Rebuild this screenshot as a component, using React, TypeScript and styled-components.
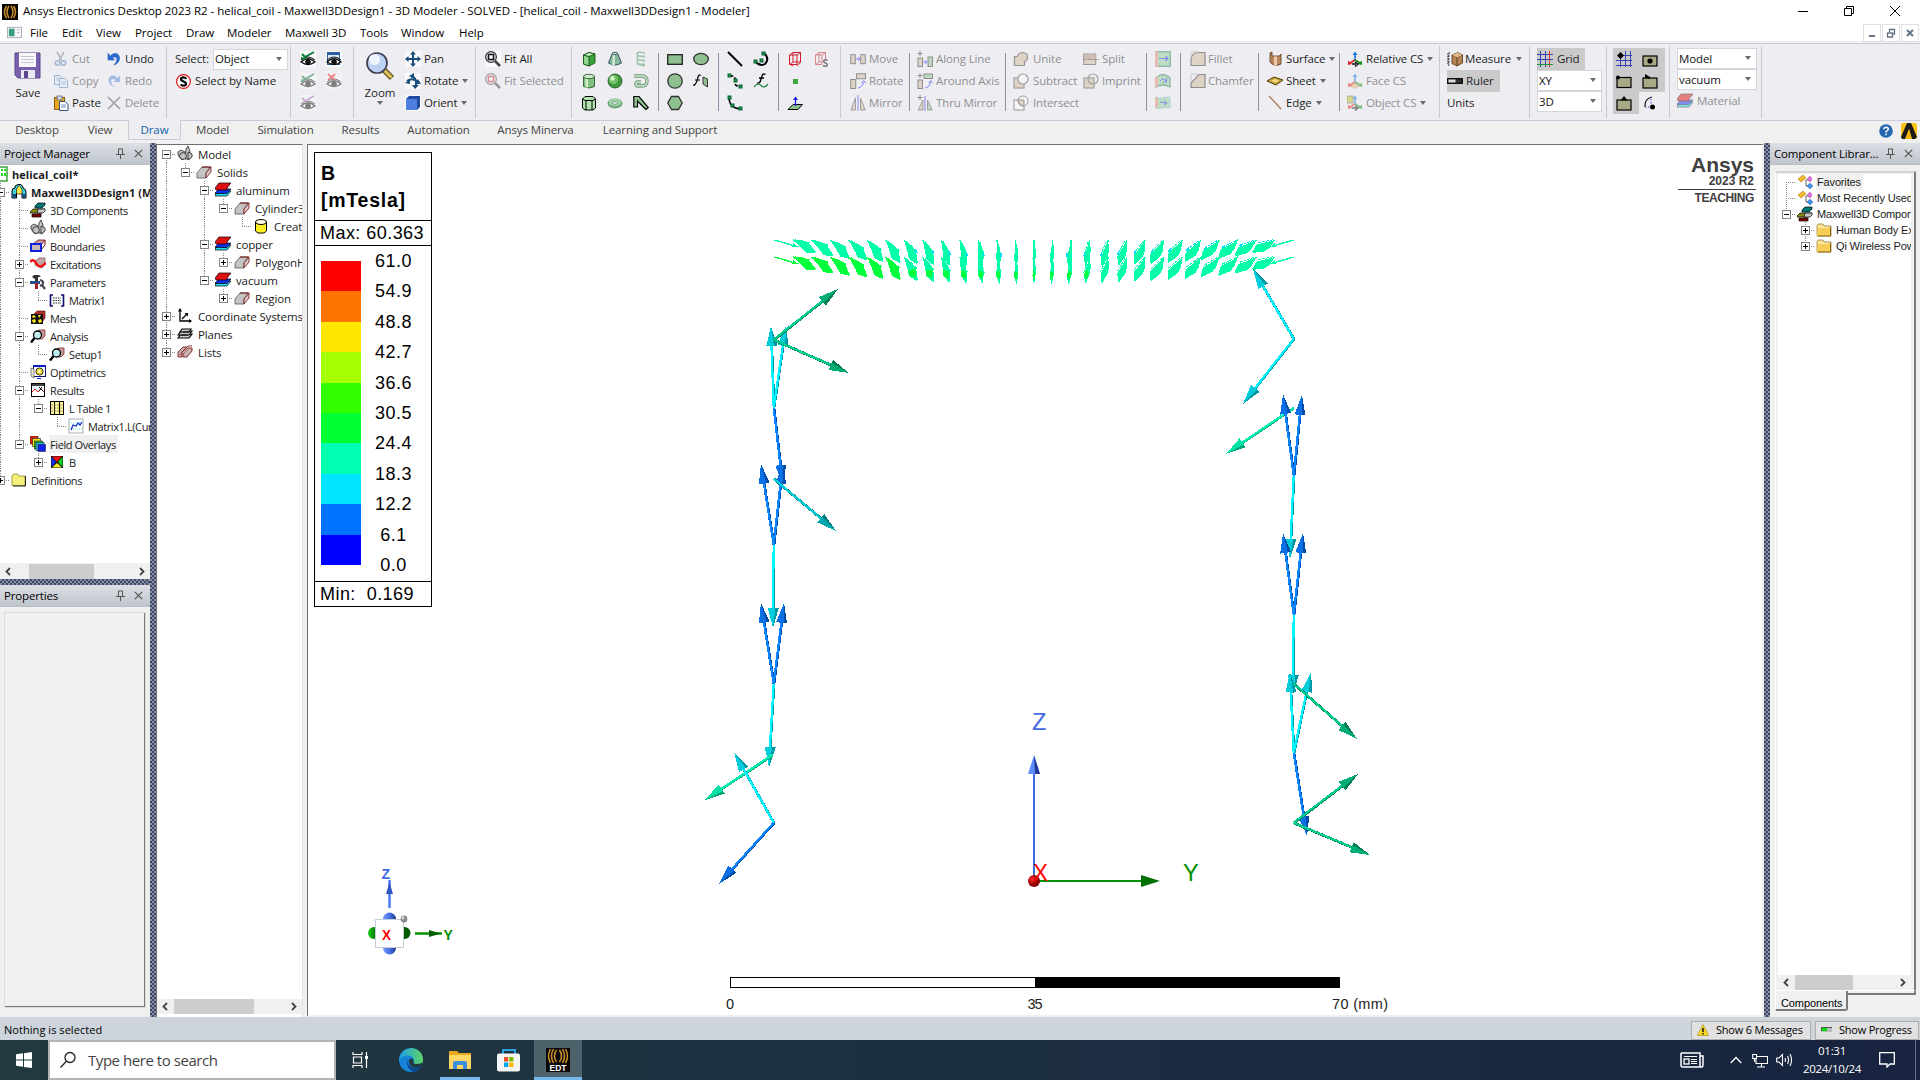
import React from 'react';
import styled, { createGlobalStyle, css } from 'styled-components';

const UI = `"Open Sans", "Noto Sans", sans-serif`;
const SANS = `"Liberation Sans", Arial, sans-serif`;

const Global = createGlobalStyle`
  * { box-sizing: border-box; }
  html, body { margin: 0; padding: 0; overflow: hidden; background: #f0f0f0; }
  body { font-family: ${UI}; font-size: 11.5px; color: #000; }
  svg { display: block; flex: none; }
`;

/* ---------- shell ---------- */
const Shell = styled.div`
  width: 1920px; height: 1080px; display: flex; flex-direction: column; overflow: hidden;
  white-space: nowrap; background: #f0f0f0;
`;
const TitleBar = styled.header`
  height: 23px; flex: none; background: #fff; display: flex; align-items: center; padding-left: 2px;
`;
const TitleText = styled.div`
  flex: 1; margin-left: 5px; font-size: 11.5px; letter-spacing: -0.02px; line-height: 18px; padding-bottom: 1px;
`;
const WindowButtons = styled.div`
  display: flex; padding-bottom: 2px; padding-right: 2px;
  & > svg { margin: 0 15px; }
`;
const MenuBar = styled.nav`
  height: 20px; flex: none; display: flex; align-items: center; background: #fff; padding-left: 7px;
  border-bottom: 2px solid #f0f0f0;
`;
const MenuItem = styled.span<{ $w: number }>`
  width: ${p => p.$w}px; font-size: 11.5px; letter-spacing: -0.05px; line-height: 16px; padding-top: 2px;
`;
const MdiButtons = styled.div`
  margin-left: auto; display: flex; gap: 1px; align-self: flex-start; padding-right: 1px; padding-top: 1px;
`;
const MdiButton = styled.div`
  width: 18px; height: 18px; border: 1px solid #dfdfe4; background: #fff; display: flex; align-items: center; justify-content: center;
`;

/* ---------- ribbon ---------- */
const RibbonBar = styled.section`
  height: 78px; flex: none; display: flex; background: #eeeef2; border-top: 1px solid #c9cbdd; border-bottom: 1px solid #c9cbdd;
  padding-top: 2px;
`;
const Group = styled.div<{ $w: number; $last?: boolean }>`
  width: ${p => p.$w}px; height: 72px; flex: none; display: flex; padding-top: 2px;
  border-right: 1px solid ${p => (p.$last ? 'transparent' : '#c6c8d8')};
`;
const Col = styled.div<{ $w: number; $ml?: number }>`
  width: ${p => p.$w}px; margin-left: ${p => p.$ml ?? 0}px; flex: none; display: flex; flex-direction: column;
`;
const Rule = styled.div`
  width: 1px; height: 58px; margin-top: 5px; background: #8592a5; flex: none;
`;
const Tool = styled.div<{ $off?: boolean; $on?: boolean; $gap?: number }>`
  height: 22px; display: flex; align-items: center; gap: ${p => p.$gap ?? 3}px; font-size: 11.5px; letter-spacing: -0.12px; color: #1e1e1e;
  & > span { line-height: 16px; padding-bottom: 1px; }
  ${p => p.$off && css`color: #8f8f92; & > svg { opacity: 0.5; }`}
  ${p => p.$on && css`background: #cacacb;`}
`;
const BigTool = styled.div`
  display: flex; flex-direction: column; align-items: center; padding-top: 3px; font-size: 11.5px; color: #1e1e1e;
  & > span { line-height: 16px; margin-top: 4px; }
`;
const Arrow = styled.i<{ $ml?: number }>`
  width: 0; height: 0; border: 3px solid transparent; border-top: 4px solid #6b6b6b; border-bottom: 0; margin-left: ${p => p.$ml ?? 1}px;
`;
const Combo = styled.div<{ $w: number }>`
  width: ${p => p.$w}px; height: 21px; border: 1px solid #d5d5dc; background: #fff; display: flex; align-items: center;
  justify-content: space-between; padding: 0 5px 1px 1px; font-size: 11.5px; letter-spacing: -0.1px; color: #111; flex: none;
`;
const Toggle = styled.div<{ $on?: boolean }>`
  width: 26px; height: 22px; display: flex; align-items: center; justify-content: center; padding: 0 4px 1px 0; background: ${p => (p.$on ? '#cacacb' : 'transparent')};
`;
const ToggleRow = styled.div` display: flex; `;

/* ---------- tabs ---------- */
const TabStrip = styled.div`
  height: 22px; flex: none; display: flex; background: #f0f0f0; padding-left: 2px;
`;
const Tab = styled.div<{ $w: number; $active?: boolean }>`
  width: ${p => p.$w}px; height: 19px; text-align: center; font-size: 11.5px; line-height: 17px; letter-spacing: -0.1px; color: #444;
  ${p => p.$active && css`
    color: #0e5fa8; background: #eeeef2; border: 1px solid #c9cbdd; border-top: 0; position: relative; margin-top: -1px; height: 20px; line-height: 20px;
  `}
`;
const TabIcons = styled.div`
  margin-left: auto; display: flex; gap: 8px; align-items: center; padding-right: 3px; height: 20px;
`;

/* ---------- workspace ---------- */
const Workspace = styled.main` flex: 1; min-height: 0; display: flex; `;
const Dock = styled.aside` width: 150px; flex: none; display: flex; flex-direction: column; `;
const DockHeader = styled.div`
  height: 22px; flex: none; display: flex; align-items: center; gap: 9px; padding: 0 7px 0 4px;
  background: linear-gradient(#dcdfe4, #bfc5cd); font-size: 11.5px; letter-spacing: -0.15px;
  border-bottom: 1px solid #b9bec6;
  & > span { flex: 1; min-width: 0; }
`;
const Splitter = styled.div<{ $h?: boolean }>`
  flex: none; ${p => (p.$h ? 'height: 6px;' : 'width: 6px;')}
  background-color: #868a90;
  background-image: repeating-conic-gradient(#34497a 0 25%, #8e8e8e 0 50%);
  background-size: 4px 4px;
`;
const TreePane = styled.div` flex: 1; min-height: 0; background: #fff; overflow: hidden; `;
const TreeRow = styled.div<{ $h: number }>`
  height: ${p => p.$h}px; display: flex; align-items: center;
`;
const Cell = styled.div`
  width: 19px; height: 100%; flex: none; display: grid; grid-template-columns: 9px 1px 9px; grid-template-rows: 1fr 1px 1fr;
`;
const Dots = styled.i<{ $area: string; $h?: boolean }>`
  grid-area: ${p => p.$area};
  background: repeating-linear-gradient(${p => (p.$h ? '90deg' : '180deg')}, #8a8a8a 0 1px, transparent 1px 2px);
`;
const Expander = styled.i<{ $plus?: boolean }>`
  grid-area: 1 / 1 / 4 / 4; place-self: center; width: 9px; height: 9px; border: 1px solid #848484; background:
  linear-gradient(#000, #000) center / 5px 1px no-repeat,
  ${p => (p.$plus ? 'linear-gradient(#000, #000) center / 1px 5px no-repeat,' : '')} #fff;
`;
const TreeIcon = styled.span` width: 16px; height: 16px; flex: none; margin-left: 1px; `;
const TreeLabel = styled.span<{ $bold?: boolean; $sel?: boolean; $font: string; $size: number; $ls: number }>`
  margin-left: 3px; padding: 0 2px 0 1px; height: 100%; display: flex; align-items: center; color: #1b1b1b; line-height: 15px;
  font-family: ${p => p.$font}; font-size: ${p => p.$size}px; letter-spacing: ${p => p.$ls}px;
  font-weight: ${p => (p.$bold ? 700 : 400)}; background: ${p => (p.$sel ? '#f0f0f0' : 'transparent')};
`;
const ScrollTrack = styled.div<{ $h: number }>`
  height: ${p => p.$h}px; flex: none; background: #f0f0f0; display: flex; align-items: center; justify-content: space-between; padding: 0 4px;
`;
const Thumb = styled.div<{ $w: number; $l: number }>`
  width: ${p => p.$w}px; height: 15px; background: #cdcdcd; margin-left: ${p => p.$l}px; margin-right: auto;
`;
const PropertiesBox = styled.div`
  margin: 5px 4px 9px; flex: 1; border: 1px solid #fff; border-right: 2px solid #7a7a7a; border-bottom: 2px solid #7a7a7a; outline: 1px solid #dcdcdc; outline-offset: -1px;
`;
const ModelPane = styled.div`
  width: 147px; flex: none; background: #fff; display: flex; flex-direction: column; border-top: 1px solid #6f6f6f; border-left: 1px solid #6f6f6f;
  border-right: 1px solid #e3e3e3; margin-top: 1px; padding-bottom: 3px;
`;
const Gap = styled.div` width: 4px; flex: none; background: #f0f0f0; `;
const Viewport = styled.div`
  flex: 1; position: relative; background: #fff; border-top: 1px solid #6f6f6f; border-left: 1px solid #6f6f6f; margin-top: 1px; overflow: hidden;
  border-bottom: 2px solid #f0f0f0; border-right: 2px solid #f0f0f0;
`;
const LibraryFrame = styled.div`
  flex: 1; min-height: 0; margin: 6px 4px 6px 5px; display: flex; flex-direction: column;
`;
const LibraryPane = styled.div`
  flex: 1; min-height: 0; border: 1px solid #fff; border-top: 2px solid #d4d4d4; border-right: 2px solid #7a7a7a; padding: 1px 3px 0 2px; display: flex; flex-direction: column;
`;
const LibraryTabs = styled.div` display: flex; height: 20px; flex: none; `;
const LibraryTab = styled.div`
  width: 73px; border: 1px solid #fff; border-top: 0; border-right: 2px solid #7a7a7a; border-bottom: 2px solid #7a7a7a; font: 11px ${SANS}; line-height: 25px; padding-left: 5px;
  letter-spacing: -0.1px; border-radius: 0 0 3px 2px;
`;
const LibraryEdge = styled.div` flex: 1; height: 4px; border-bottom: 2px solid #7a7a7a; border-right: 2px solid #7a7a7a; `;

/* ---------- legend ---------- */
const Legend = styled.div`
  position: absolute; left: 6px; top: 7px; width: 118px; height: 455px; border: 1px solid #000; background: #fff;
  display: flex; flex-direction: column; font-family: ${SANS}; font-size: 18px; letter-spacing: 0.45px;
`;
const LegendTitle = styled.div`
  height: 67px; padding: 7px 0 0 6px; font-size: 19.5px; font-weight: 700; line-height: 27px; letter-spacing: 0.75px;
`;
const LegendLine = styled.div` height: 25px; border-top: 1px solid #000; line-height: 24px; padding-left: 5px; white-space: pre; `;
const LegendBody = styled.div` flex: 1; border-top: 1px solid #000; display: flex; padding: 15px 0 0 6px; `;
const Swatches = styled.div` width: 40px; height: 304px; display: flex; flex-direction: column; `;
const Swatch = styled.i<{ $c: string }>` flex: 1; background: ${p => p.$c}; `;
const Ticks = styled.div` margin: -15px 0 0 13px; width: 39px; `;
const Tick = styled.div` height: 30.4px; line-height: 30.4px; text-align: center; `;
const Brand = styled.div`
  position: absolute; right: 6px; top: 8px; width: 78px; text-align: right; font-family: ${SANS}; font-weight: 700; color: #404040;
  display: flex; flex-direction: column;
`;
const BrandName = styled.div` font-size: 21px; line-height: 24px; letter-spacing: 0; padding-right: 2px; `;
const BrandYear = styled.div` font-size: 12px; line-height: 12px; padding: 0 2px 2px 0; border-bottom: 1px solid #404040; margin-top: -2px; `;
const BrandTier = styled.div` font-size: 12px; line-height: 16px; padding-right: 2px; letter-spacing: -0.4px; `;

/* ---------- status + taskbar ---------- */
const StatusBar = styled.footer`
  height: 23px; flex: none; background: #cdd4dc; display: flex; align-items: center; padding: 0 1px 0 4px; font-size: 11px; gap: 4px;
  & > span { flex: 1; padding-top: 1px; letter-spacing: 0.05px; }
`;
const StatusButton = styled.div<{ $w: number }>`
  width: ${p => p.$w}px; height: 19px; margin-top: 3px; border: 1px solid #adadad; background: #e1e1e1; display: flex; align-items: center; padding: 0 0 1px 5px; gap: 7px;
  font-size: 11px; letter-spacing: -0.22px;
`;
const Taskbar = styled.footer`
  height: 40px; flex: none; display: flex; background: linear-gradient(90deg, #22393f, #1d3240 35%, #1b2a43 70%, #18243f);
`;
const Start = styled.div` width: 48px; display: flex; align-items: center; justify-content: center; `;
const Search = styled.div`
  width: 288px; background: #fff; border: 2px solid #b4b4b6; display: flex; align-items: center; padding-left: 9px; gap: 11px; font-size: 15px; color: #444;
  letter-spacing: -0.45px;
`;
const TaskButton = styled.div<{ $ml: number; $w: number; $active?: boolean; $open?: boolean }>`
  margin-left: ${p => p.$ml}px; width: ${p => p.$w}px; display: flex; align-items: center; justify-content: center;
  background: ${p => (p.$active ? '#4d626a' : 'transparent')}; border-bottom: 3px solid ${p => (p.$open ? '#76b9ed' : 'transparent')}; padding-top: 3px;
`;
const Tray = styled.div` margin-left: auto; display: flex; align-items: center; color: #fff; padding-right: 4px; `;
const TrayItem = styled.div<{ $mr: number }>` margin-right: ${p => p.$mr}px; `;
const Clock = styled.div` width: 62px; text-align: center; font-size: 11.5px; line-height: 18px; letter-spacing: -0.3px; margin-right: 16px; `;
const ShowDesktop = styled.i` width: 1px; height: 40px; background: #66708a; margin-left: 20px; `;

/* ---------- icons ---------- */
const G = '#8fc08f';
const TAN = '#d2b99b';
const node = (x: number, y: number) => <rect key={`${x}-${y}`} x={x} y={y} width="3" height="3" fill="#2e8b57" stroke="#063" />;
const eye = (c = '#111') => (
  <g fill="none" stroke={c}>
    <path d="M1 11 Q8 4.5 15 11 Q8 16 1 11Z" fill="#fff" strokeWidth="1.3" />
    <circle cx="8" cy="11" r="2.4" fill={c} />
    <path d="M1 9 Q8 3 15 9" />
  </g>
);
const block = (
  <g><path d="M1 9 6 3H14L10 9V14H1Z" fill="#c4c4c4" stroke="#555" strokeWidth=".8" /><path d="M10 9 15 3V8L10 14Z" fill="#d8c4c4" stroke="#7a1010" strokeWidth=".8" /><path d="M6 3H15" stroke="#7a1010" /></g>
);
const cube3 = (
  <g><path d="M5 4 8 1H15V3L12 6H5Z" fill="#007878" stroke="#000" strokeWidth=".7" /><path d="M0 10 3 7H15L12 11H0Z" fill="#8a8a10" stroke="#000" strokeWidth=".7" /><path d="M8 7H15V9L13 11H7Z" fill="#c8c8c8" stroke="#000" strokeWidth=".7" /><path d="M2 12H11V15H2Z" fill="#800000" stroke="#000" strokeWidth=".7" /></g>
);
const folder = (
  <g><path d="M1 4 2 2H7L8 4H15V14H1Z" fill="#fbe79a" stroke="#8a7020" strokeWidth=".7" /><path d="M2 6H15V14H1Z" fill="#f6cd56" /><path d="M14.5 5V14H2" fill="none" stroke="#8a6a10" /></g>
);
const folderY = (
  <g><path d="M1 4 2.500 2H6.500L8 4H14V13.500H1Z" fill="#f4f07a" stroke="#8a8a30" strokeWidth=".8" /><path d="M14.500 4V14H2" fill="none" stroke="#222" /></g>
);
const favorite = (
  <g><path d="M1 5 6 1 9 4 4 8Z" fill="#f0b930" stroke="#b07a10" strokeWidth=".6" /><path d="M9 6H12M9 6V12H12" stroke="#666" fill="none" /><path d="M10 5 13 2 15 5 13 8Z" fill="#e070e0" stroke="#a040a0" strokeWidth=".5" /><path d="M10 12 13 9 16 12 13 15Z" fill="#4a90e8" stroke="#2060b0" strokeWidth=".5" /></g>
);
const magnet = (
  <g><path d="M1 14V7Q1 4 4 4V2L7 .5H10L12 3V4Q15 5 15 8V14H11V9Q8 7 5.500 9V14Z" fill="#3fd0dc" stroke="#000" /><path d="M5.500 5 8 1.500 11 5V10H5.500Z" fill="#ffe94a" stroke="#000" strokeWidth=".6" /><path d="M1.500 10H5V14H1.500ZM11.500 10H14.500V14H11.500Z" fill="#1a4a80" /></g>
);
const modelIcon = (
  <g stroke="#222" strokeWidth=".8" fill="#c4c4c4"><path d="M1 6 4 4 8 6V12L5 14 1 9Z" /><path d="M9 3 11 0 13 5V13H8Z" /><circle cx="6" cy="10" r="3.4" /><path d="M11 6 15 8V11L11 14Z" /></g>
);
const magnifier = (
  <g><path d="M7 4 9 2H15V8L12 11H9Z" fill="#c79a9a" stroke="#701818" strokeWidth=".7" /><circle cx="7.5" cy="7" r="4" fill="#b9ecec" stroke="#000" strokeWidth="1.3" /><path d="M4.5 10 1 14.5" stroke="#000" strokeWidth="2.4" /><path d="M6 5H8" stroke="#fff" /></g>
);
const layers = (
  <g stroke="#000" strokeWidth=".7"><path d="M0 13 4 9H16L12 14H0Z" fill="#20e0f0" /><path d="M0 11 4 7H16L12 11.5H0Z" fill="#1030e8" /><path d="M0 6 4 1H16L12 6V8H1Z" fill="#e01010" /></g>
);
const booleanTile = (front: React.ReactNode) => <g stroke="#555" strokeWidth="1.200"><rect x="1" y="5" width="10" height="10" fill={TAN} />{front}</g>;
const csAxes = (
  <g strokeWidth="1.6" fill="none"><path d="M8 9V3" stroke="#1978d8" /><path d="M5.5 4 8 .5 10.5 4Z" fill="#1978d8" /><path d="M8 9 3 12" stroke="#e02020" /><path d="M1 9.5V14L5 13Z" fill="#e02020" /><path d="M8 9 13 12" stroke="#109010" /><path d="M15 9.5V14L11 13Z" fill="#109010" /></g>
);

const ICONS: Record<string, React.ReactNode> = {
  ansysEdt: <g><rect width="16" height="16" fill="#090705" /><g fill="none" stroke="#c98a2a" strokeWidth="1.5"><path d="M7 2Q3 8 7 14M4.5 2Q.5 8 4.5 14M9 2Q13 8 9 14M11.5 2Q15.500 8 11.500 14" /></g></g>,
  doc: <g><rect x=".5" y="2.500" width="15" height="11" fill="#f4f6fb" stroke="#a9adb9" /><rect x="2" y="4" width="6" height="8" fill="#3a9a80" /><path d="M11 5H13M11 8H13" stroke="#9ab" /></g>,
  cut: <g fill="none" stroke="#5a82b8" strokeWidth="1.600"><path d="M4 1 9 10M11 1 6 10" stroke="#7b8794" /><circle cx="4.500" cy="12" r="2.200" /><circle cx="10.500" cy="12" r="2.200" /></g>,
  copy: <g fill="#e8f0fa" stroke="#4f79b3"><path d="M1.500 2.500H7L9.500 5V11.500H1.500Z" /><path d="M6.500 5.500H12L14.500 8V14.500H6.500Z" /><path d="M8 9H13M8 11H13M3 5H6M3 7H6" strokeWidth=".8" /></g>,
  paste: <g><rect x="1.500" y="2.500" width="10" height="12" fill="#e8a820" stroke="#83600f" /><rect x="4" y="1" width="5" height="4" fill="#d6dae3" stroke="#556" strokeWidth=".7" /><path d="M6.500 6.500H12L15 9.500V15.500H6.500Z" fill="#fff" stroke="#35527a" /><path d="M8 10H13M8 12H13" stroke="#6a8fc4" /></g>,
  undo: <path d="M2 2.500V9H8.500L6.300 6.800Q10.500 4.500 11 8 11 11 8 14 13.500 12 13.500 7 13 2.500 9 2.500 6.500 2.500 4.400 4.900Z" fill="#2a6fd6" stroke="#1d4fa6" strokeWidth=".6" />,
  redo: <path d="M14 2.500V9H7.500L9.700 6.800Q5.500 4.500 5 8 5 11 8 14 2.500 12 2.500 7 3 2.500 7 2.500 9.500 2.500 11.600 4.900Z" fill="#5a8cd6" />,
  del: <path d="M2 2 14 14M14 2 2 14" stroke="#555" strokeWidth="1.600" />,
  selName: <g><circle cx="8" cy="8" r="6.500" fill="#fff" stroke="#e01010" strokeWidth="1.100" /><path d="M10.800 5.500Q8 2.800 5.700 5 5.200 7 8 8T10.300 11Q8 13 5.200 10.800" fill="none" stroke="#000" strokeWidth="2" /></g>,
  showA: <g><rect width="16" height="16" fill="#fafafa" />{eye()}<path d="M2 3 5 6 14 1M1 7 5 8" stroke="#0c7a3c" strokeWidth="2" fill="none" /></g>,
  showWin: <g><rect width="16" height="16" fill="#fafafa" /><rect x="1.500" y="1.500" width="12" height="12" fill="#dbe8f5" stroke="#2a5f9c" /><rect x="1" y="1" width="13" height="3" fill="#2a5f9c" />{eye()}</g>,
  hideX: <g><rect width="16" height="16" fill="#fafafa" />{eye()}<path d="M2 1 9 7M9 1 2 7" stroke="#e02020" strokeWidth="2" fill="none" /></g>,
  showP: <g><rect width="16" height="16" fill="#fafafa" />{eye()}<path d="M2 3 5 6 14 1" stroke="#b070c0" strokeWidth="2" fill="none" /></g>,
  pan: <g><rect width="16" height="16" fill="#fafafa" /><path d="M8 0 11 3.500H9V7H12.500V5L16 8 12.500 11V9H9V12.500H11L8 16 5 12.500H7V9H3.500V11L0 8 3.500 5V7H7V3.500H5Z" fill="#1a4d7c" /></g>,
  rotate: <g><rect width="16" height="16" fill="#fafafa" /><g fill="none" stroke="#1a4d7c" strokeWidth="2"><path d="M6 3Q12 4 11 13" /><path d="M2 8Q7 4 14 9" /></g><path d="M4 3 9 0V6ZM0 10 5 6 5 11ZM13 6 16 11 11 11ZM7 12 14 12 10 16Z" fill="#1a4d7c" /></g>,
  orient: <g><rect width="16" height="16" fill="#fafafa" /><path d="M1 4 4 1H15V12L12 15H1Z" fill="#1f4aa0" /><rect x="1" y="4" width="11" height="11" fill="#4d7fe0" /></g>,
  fitAll: <g><rect width="16" height="16" fill="#fafafa" /><circle cx="6" cy="6" r="5.400" fill="#d8e0f4" stroke="#333" strokeWidth="1.200" /><rect x="3.500" y="3.500" width="5" height="5" fill="#fff" stroke="#111" strokeWidth="1.500" /><path d="M10 10 15 15" stroke="#444" strokeWidth="2.600" /></g>,
  fitSel: <g><circle cx="6" cy="6" r="5.400" fill="#ead8e0" stroke="#555" strokeWidth="1.200" /><rect x="3.500" y="3.500" width="5" height="5" fill="#fff" stroke="#c03030" strokeWidth="1.500" /><path d="M10 10 15 15" stroke="#444" strokeWidth="2.600" /></g>,
  box: <g stroke="#0e4a0e" strokeWidth=".8"><path d="M2.500 4 8 1.500 14 3V12L8 15 2.500 13Z" fill="#3aa23a" /><path d="M2.500 4 8 5.500V15L2.500 13Z" fill="#8fd88f" /><path d="M2.500 4 8 1.500 14 3 8 5.500Z" fill="#c5efc0" /></g>,
  cyl: <g stroke="#1d4a1d" strokeWidth=".8"><path d="M2.500 3.500V13.500Q8 16.500 13.500 13.500V3.500Z" fill="#7fc37f" /><path d="M4.500 5V14.500H7V5Z" fill="#d3f0d0" stroke="none" /><ellipse cx="8" cy="3.500" rx="5.500" ry="2.200" fill="#cdeccb" /></g>,
  poly: <g stroke="#000"><path d="M1.500 4 4 1.500H12L14.500 4V13L12 15H4L1.500 13Z" fill="#b3e3b0" /><path d="M1.500 4 4 5.500H12L14.500 4M5 5.500V15M11 5.500V15" fill="none" /></g>,
  cone: <g stroke="#24445f" strokeWidth=".9"><path d="M5.500 2 1.500 12Q8 16 14.500 12L10.500 2Z" fill="#86b79a" /><path d="M6 3 5 14H8V3Z" fill="#cfeacb" stroke="none" /><ellipse cx="8" cy="2.500" rx="2.500" ry="1.200" fill="#d8efe0" /></g>,
  sphere: <g><circle cx="8" cy="8" r="7" fill="#3f9a3a" stroke="#1d4a1d" strokeWidth=".8" /><circle cx="6.500" cy="6.500" r="4.500" fill="#76c06c" /><circle cx="5.500" cy="5.500" r="2.200" fill="#d6f2cf" /></g>,
  torus: <g><ellipse cx="8" cy="8.500" rx="7.500" ry="5" fill="#6ea87a" /><ellipse cx="8" cy="7.500" rx="6" ry="3.500" fill="#a9d6b0" /><ellipse cx="8" cy="8" rx="3" ry="1.300" fill="#eef4ee" stroke="#4f8560" strokeWidth=".7" /></g>,
  helix: <g fill="none" stroke="#9cc5ab" strokeWidth="1.500"><path d="M12 2Q4 0 4 3T12 5M12 6Q4 4 4 7T12 9M12 10Q4 8 4 11T12 13M4 13 12 15" /></g>,
  spiral: <g fill="none"><path d="M1 3H9Q14 3 14 8T9 13H5Q3 13 3 11T5 9H8" stroke="#6b9c77" strokeWidth="3.400" /><path d="M1 3H9Q14 3 14 8T9 13H5Q3 13 3 11T5 9H8" stroke="#cfe4d2" strokeWidth="1.400" /></g>,
  wireBend: <path d="M.8 1.500H6L15.300 12.500 12.800 14.500 4.500 6V12H.8Z" fill="#8fc08f" stroke="#000" strokeWidth="1.200" />,
  rect: <rect x=".7" y="3.700" width="14.600" height="9.600" fill={G} stroke="#222" strokeWidth="1.300" />,
  ellipse: <ellipse cx="8" cy="8" rx="7.300" ry="5.600" fill={G} stroke="#333" strokeWidth="1.300" />,
  circle: <circle cx="8" cy="8" r="7.200" fill={G} stroke="#333" strokeWidth="1.300" />,
  hexagon: <path d="M4.500 1.500H11.500L15.200 8 11.500 14.500H4.500L.8 8Z" fill={G} stroke="#333" strokeWidth="1.300" />,
  eqSurf: <g><path d="M0 12Q2 13 4 8L5 4Q6 1 8 2.500M2 7H7" fill="none" stroke="#000" strokeWidth="1.200" /><path d="M10 4 14.500 6V14L10 11Z" fill={G} stroke="#333" /></g>,
  line: <path d="M1 1 15 15" stroke="#000" strokeWidth="1.900" />,
  spline: <g><path d="M2 3Q9 2 8 8T14 13" stroke="#000" strokeWidth="1.800" fill="none" strokeDasharray="4 2" />{node(1, 1)}{node(7, 6)}{node(12, 12)}</g>,
  arc3: <g><path d="M2 2Q2 13 13 14" stroke="#000" strokeWidth="1.500" fill="none" />{node(1, 1)}{node(4, 9)}{node(12, 12)}</g>,
  arcC: <g><path d="M11 2Q17 8 12 13 7 16 2 10" stroke="#000" strokeWidth="2" fill="none" />{node(9, 1)}{node(7, 8)}{node(1, 9)}</g>,
  eqCurve: <g fill="none"><path d="M4 10Q7 11 8 6L9 3Q10 0 12.500 1.500M6 5H11" stroke="#000" strokeWidth="1.300" /><path d="M1 14Q5 9 8 12.500T15 11" stroke="#2f8a4a" strokeWidth="1.300" /></g>,
  wireBox: <g fill="none" stroke="#d01c2c"><path d="M2.500 4 6 1.500H13.500L10 4ZM2.500 4V13L6 15M10 4V14.500L13.500 11.500V1.500M2.500 13.500H10M6 1.500V11L2.500 13.500M6 11H13.500" /></g>,
  wireBoxS: <g fill="none" stroke="#d01c2c"><path d="M2.500 4 6 1.500H12.500L9 4ZM2.500 4V13.500H9V4M12.500 1.500V9M6 1.500V11L2.500 13.500M6 11H9" /><path d="M14.500 9.500Q12 8 11 9.500T12.500 12 14 14.500 10 14.500" stroke="#111" strokeWidth="1.600" /></g>,
  point: <rect x="6" y="6" width="5" height="5" fill="#3ea83e" />,
  plane: <g><path d="M1 14.500 6 9.500H15.500L11 14.500Z" fill={G} stroke="#000" /><path d="M8.500 11V3" stroke="#1a1af0" strokeWidth="1.300" /><path d="M6 5 8.500 1.500 11 5Z" fill="#1a1af0" /></g>,
  move: <g><rect x=".7" y="3.700" width="4.600" height="9" fill={TAN} stroke="#333" /><rect x="10.700" y="3.700" width="4.600" height="9" fill={TAN} stroke="#333" /><path d="M6 8H9M8 6 10 8 8 10" stroke="#22f" fill="none" /></g>,
  rot: <g><rect x=".7" y="6.500" width="5" height="9" fill={TAN} stroke="#333" /><rect x="6.500" y=".7" width="9" height="5" fill={TAN} stroke="#333" /><path d="M8 15Q13 14 13.500 9M11.500 10 13.700 7.500 15.500 10" stroke="#22f" fill="none" /></g>,
  mirror: <g><path d="M5.500 3V15H.8ZM10.500 3V15H15.200Z" fill={TAN} stroke="#333" strokeWidth=".8" /><path d="M8 0V16" stroke="#22f" /></g>,
  along: <g><path d="M3 0V5M.5 2.500H5.500" stroke="#333" /><rect x="1" y="7" width="4.500" height="8.500" fill={TAN} stroke="#333" /><rect x="11" y="6" width="4.500" height="9.500" fill={G} stroke="#333" /><path d="M6 11H9M8 9 10 11 8 13" stroke="#22f" fill="none" /></g>,
  around: <g><path d="M3 0V5M.5 2.500H5.500" stroke="#333" /><rect x="1" y="7" width="4.500" height="8.500" fill={TAN} stroke="#333" /><rect x="7" y="1" width="8.500" height="4.500" fill={G} stroke="#333" /><path d="M8 15Q13 14 13.500 9M11.500 10 13.700 7.500 15.500 10" stroke="#22f" fill="none" /></g>,
  thru: <g><path d="M3 0V5M.5 2.500H5.500" stroke="#333" /><path d="M6 5V15H1Z" fill={TAN} stroke="#333" strokeWidth=".8" /><path d="M10.500 5V15H15.200Z" fill={G} stroke="#333" strokeWidth=".8" /><path d="M8 1V16" stroke="#22f" /></g>,
  unite: <path d="M1.500 5.500H4.500Q5 1.500 10 1.500 15 2 14.500 7 14 10 11.500 10.500V14.500H1.500Z" fill={TAN} stroke="#444" strokeWidth="1.200" />,
  subtract: booleanTile(<circle cx="10" cy="6" r="5" fill="#fff" />),
  intersect: <g stroke="#444"><rect x="1" y="5" width="10" height="10" fill="#fff" /><circle cx="10" cy="6" r="5" fill="#fff" /><path d="M5 5H11V10.800Q6 11 5 5Z" fill={TAN} /></g>,
  imprint: booleanTile(<circle cx="10" cy="6" r="5" fill="none" />),
  split: <g><rect x=".7" y="3" width="12" height="10.500" fill={TAN} stroke="#444" /><rect x="1" y="3.500" width="11.500" height="4.500" fill="#b58d75" /><path d="M0 8.500H16" stroke="#222" strokeDasharray="1.500 1" /></g>,
  swV: <g><rect x=".7" y=".7" width="14.600" height="14.600" fill="#8fcf95" stroke="#2a7f5a" strokeWidth="1.300" /><rect x="0" y="0" width="3" height="16" fill="#e08c70" /><path d="M4 7.500H13M10.500 5 13 7.500 10.500 10" stroke="#2222f0" fill="none" strokeWidth="1.200" /></g>,
  swA: <g><path d="M1 5Q8-2 15 5V14Q8 10 1 14Z" fill="#8fcf95" stroke="#2a7f5a" strokeWidth="1.300" /><path d="M0 4 3 3V13L0 15Z" fill="#e08c70" /><path d="M5 8Q8 4 11 8M11.500 5V9H8" stroke="#2222f0" fill="none" /></g>,
  swP: <g><path d="M1 2Q5 4 8 3T15 2V13Q11 12 8 13T1 13Z" fill="#8fcf95" stroke="#7ab0cc" /><path d="M0 2 3 3V12L0 13Z" fill="#e08c70" /><path d="M5 7 11 8M9 6 12 8 9 10" stroke="#2222f0" fill="none" /></g>,
  fillet: <g><path d="M1 14.500V8Q2 2 8 1.500H15V14.500Z" fill={TAN} stroke="#333" strokeWidth="1.200" /><path d="M1 7V1H8" stroke="#999" fill="none" strokeWidth=".8" /></g>,
  chamfer: <g><path d="M1 14.500V10L9 1.500H15V14.500Z" fill={TAN} stroke="#333" strokeWidth="1.200" /><path d="M1 8V1H8" stroke="#999" fill="none" strokeWidth=".8" /></g>,
  surface: <g><path d="M3 2 5 1V5H12Q14 4 14 3V13Q10 16 5 13L3 11Z" fill="#b9855c" stroke="#5e3a1e" strokeWidth=".8" /><path d="M7 5.500H10V14.500H7Z" fill="#eccaa5" /></g>,
  sheet: <g><path d="M0 8 7 4 16 7 9 12Z" fill="#c9a437" stroke="#4f3c0a" /><path d="M4 8 8 6 12 7.500 9 9.500Z" fill="#f0dc8a" /></g>,
  edge: <path d="M2 1 14 14" stroke="#b07c52" strokeWidth="1.400" />,
  relCS: <g>{csAxes}<path d="M5 13H9M8 11 11 13 8 15.500" stroke="#111" strokeWidth="1.500" fill="none" /></g>,
  faceCS: <g><path d="M2 13 8 9 14 12 8 16Z" fill="#e0b070" />{csAxes}</g>,
  objCS: <g><rect x="0" y="1" width="6" height="7" fill="#b8c020" stroke="#555" strokeWidth=".7" />{csAxes}<path d="M5 13H10M8 11 11 13 8 15.500" stroke="#111" strokeWidth="1.500" fill="none" /></g>,
  measure: <g><path d="M3 2H1V14H3M1 5H3M1 8H3M1 11H3" stroke="#000" fill="none" strokeDasharray="1.500 .8" /><path d="M5 4 11 1.500 15.500 4V12L10 15 5 12.500Z" fill="#b98556" stroke="#4c2e12" strokeWidth=".8" /><path d="M5 4 10 6.500V15M10 6.500 15.500 4" stroke="#4c2e12" fill="none" strokeWidth=".8" /><path d="M5 4 11 1.500 15.500 4 10 6.500Z" fill="#e0b98c" /></g>,
  ruler: <g><rect x=".7" y="5.700" width="14.600" height="4.600" fill="#333" stroke="#000" strokeWidth="1.200" /><rect x="1.500" y="6.500" width="7" height="3" fill="#ddd" /></g>,
  grid: <g strokeWidth="1"><path d="M3.500 0V16M8.500 0V16M0 3.500H16M0 8.500H16" stroke="#3344b0" /><path d="M12.500 0V16" stroke="#e03030" /><path d="M0 13.500H16" stroke="#159a30" /></g>,
  snapGrid: <g><path d="M9.500 0V16M14.500 0V16M4.500 6V16M7 4.500H16M0 9.500H16M0 14.500H16" stroke="#3344b0" strokeWidth="1" /><path d="M4.500 1 8 4.500 4.500 8 1 4.500Z" fill="#000" /></g>,
  snapC: <g><rect x="1" y="5" width="14" height="10" fill="#a9a986" stroke="#000" strokeWidth="1.200" /><circle cx="8" cy="10" r="2.600" fill="#000" /></g>,
  snapV: <g><rect x="1" y="4.500" width="14" height="10" fill="#a9a986" stroke="#000" strokeWidth="1.200" /><circle cx="2" cy="4.500" r="2" fill="#000" /></g>,
  snapE: <g><rect x="1" y="5" width="14" height="10" fill="#a9a986" stroke="#000" strokeWidth="1.200" /><path d="M3 5V1L8 4V6Z" fill="#000" /></g>,
  snapF: <g><rect x="1" y="5" width="14" height="10" fill="#a9a986" stroke="#000" strokeWidth="1.200" /><path d="M8 1 11.500 5.500H4.500Z" fill="#000" /></g>,
  snapQ: <g><path d="M3 12Q2 4 10 2" stroke="#111" fill="none" strokeWidth="1.200" /><path d="M3 12H9M9 4V10" stroke="#44c" fill="none" strokeDasharray="1.500 1.500" /><circle cx="10.500" cy="12" r="2.500" fill="#000" /></g>,
  material: layers,
  hcoil: <g><rect x="1" y="1" width="14" height="14" fill="#fff" stroke="#0a8a0a" strokeWidth="1.200" /><path d="M9 3H11V5H9ZM12 3H14V5H12ZM9 7H11V10H9ZM12 7H14V10H12Z" fill="#1edc1e" /></g>,
  magnet, cube3, modelIcon, magnifier, folder, folderY, favorite, block, layers,
  boundary: <g><path d="M3 6 8 2H15L12 6" fill="#c79a9a" stroke="#7a1010" strokeWidth=".8" /><path d="M15 2V7L11 12" stroke="#7a1010" fill="none" /><rect x="1" y="6" width="10" height="7" fill="#c8b8b8" stroke="#1020e0" strokeWidth="2" /></g>,
  excite: <g><path d="M5 5 9 2H15V8L12 12 5 9Z" fill="#c0a8a8" stroke="#7a5050" strokeWidth=".7" /><path d="M0 6Q3 2 6 7T12 10L16 7" stroke="#f01010" strokeWidth="2.400" fill="none" /></g>,
  tools: <g><path d="M4 1H9L11 3H8V15H5V5L2 3Z" fill="#333" /><path d="M0 7H10V10H0Z" fill="#26508a" /><path d="M5 9V15H8V9Z" fill="#a02020" /><path d="M10 6Q15 7 12 11L15 15M10 12 12 11" stroke="#445" strokeWidth="2.200" fill="none" /></g>,
  matrix: <g><path d="M4 3H1.500V14H4M12 3H14.500V14H12" stroke="#101070" strokeWidth="1.600" fill="none" /><path d="M4 6H12M4 8.500H12M4 11H12" stroke="#222" strokeDasharray="1.500 1" /></g>,
  mesh: <g><path d="M4 4 7 1H15V8L13 11" fill="#b03030" stroke="#500" strokeWidth=".6" /><rect x="1" y="4" width="12" height="10" fill="#111" /><path d="M2 6 4 5 6 7 3 8ZM8 5H11L9 8ZM2 10 5 9 6 12 3 13ZM8 10 11 9 12 12 9 13Z" fill="#ffe820" /></g>,
  optim: <g><rect x="3.500" y="1.500" width="12" height="11" fill="#fff" stroke="#101070" /><path d="M3 2H16" stroke="#1020c0" strokeWidth="2" /><path d="M1 4V12L4 14V5Z" fill="#e8e8d0" stroke="#555" strokeWidth=".7" /><circle cx="9.500" cy="7.500" r="3.600" fill="#f0d820" stroke="#333" /><circle cx="9.500" cy="7.500" r="1.300" fill="#fff" /><path d="M7 14.500H11" stroke="#1020e0" /></g>,
  results: <g><rect x="1.500" y="1.500" width="13" height="13" fill="#fff" stroke="#000" /><path d="M1 3H15" stroke="#000" strokeWidth="1.500" /><path d="M2 10 5 7 8 10 11 7 14 10" stroke="#d02020" fill="none" /><path d="M9 5 13 9M12 5 9 9" stroke="#000" /></g>,
  table: <g><rect x="1.500" y="1.500" width="13" height="13" fill="#fff79a" stroke="#000" /><path d="M5.500 2V14M10.500 2V14" stroke="#000" /><path d="M2 5H14M2 8H14M2 11H14" stroke="#776" strokeWidth=".8" strokeDasharray="2 1" /></g>,
  plot: <g><rect x="1" y="1" width="14" height="14" fill="#fff" stroke="#a8b0b8" /><path d="M1 5H15M1 11H15" stroke="#70e8e8" strokeDasharray="1 1" /><path d="M3 12 5 7 8 8 10 5 12 7 14 4" stroke="#1030d0" fill="none" strokeWidth="1.300" /></g>,
  fields: <g stroke="#222" strokeWidth=".6"><rect x="0" y="0" width="8" height="8" fill="#e02010" /><rect x="2.500" y="2.500" width="8" height="8" fill="#f0e020" /><rect x="4.500" y="5" width="8" height="8" fill="#20c020" /><rect x="6" y="6.500" width="8" height="8" fill="#20c8e8" /><rect x="8" y="8.500" width="7.500" height="7" fill="#1020f0" /></g>,
  fieldB: <g><rect x="2" y="2" width="12" height="12" fill="#111" /><path d="M3 2.500H13L8 8Z" fill="#f01010" /><path d="M2.500 3V13L7 8Z" fill="#1030f0" /><path d="M13.500 3V13L9 8Z" fill="#10d820" /><path d="M3 13.500H13L8 9Z" fill="#f8e820" /></g>,
  yCyl: <g><path d="M2.500 4V13L5 15H11L13.500 13V4Z" fill="#ffee20" stroke="#000" /><ellipse cx="8" cy="4" rx="5.500" ry="2.500" fill="#fffbe0" stroke="#000" /></g>,
  coord: <g><path d="M3 1V13H14" stroke="#000" fill="none" strokeWidth="1.300" /><path d="M5 11 10 6" stroke="#000" strokeWidth="1.300" /><path d="M7.500 5H11V8.500ZM1 3.500 3 0 5 3.500ZM12 11 15 13 12 15Z" fill="#000" /></g>,
  planes: <g fill="#ccc" stroke="#000" strokeWidth="1.200"><path d="M1 12 4 8H15L12 12Z" /><path d="M1 9 4 5H15L12 9Z" /><path d="M3 6 5 3H14L12 6Z" /><path d="M4 9H11M6 6H12" /></g>,
  lists: <g fill="#c8b0b0" stroke="#802020" strokeWidth=".9"><path d="M1 8 6 3H10L5 8V13H1Z" /><path d="M6 10 11 4H15V7L10 13H6Z" /><path d="M3 11 11 2H15" fill="none" /></g>,
};

const Icon = ({ n, s = 16 }: { n: string; s?: number }) => (
  <svg width={s} height={s} viewBox="0 0 16 16">{ICONS[n]}</svg>
);

/* ---------- ribbon content ---------- */
type ToolSpec = [icon: string, label: string, off?: boolean, menu?: boolean];
const Tools = ({ w, ml, items, gap }: { w: number; ml: number; items: ToolSpec[]; gap?: number }) => (
  <Col $w={w} $ml={ml}>
    {items.map(([icon, label, off, menu]) => (
      <Tool key={icon + label} $off={off} $gap={gap}>
        <Icon n={icon} />{label && <span>{label}</span>}{menu && <Arrow />}
      </Tool>
    ))}
  </Col>
);

const SaveIcon = () => (
  <svg width="30" height="30" viewBox="0 0 30 30">
    <path d="M2 2H27V27H5L2 24Z" fill="#7a5fae" stroke="#59448c" /><rect x="6" y="2" width="17" height="14" fill="#f8f8fb" />
    <path d="M8 5.500H21M8 8.500H21M8 11.500H21" stroke="#c4c4cf" /><rect x="8" y="19" width="14" height="8" fill="#e9e7f2" /><rect x="11" y="20" width="4" height="7" fill="#5b4790" />
  </svg>
);
const ZoomIcon = () => (
  <svg width="30" height="30" viewBox="0 0 30 30">
    <path d="M19 19 27 27" stroke="#6d5c2a" strokeWidth="6" /><path d="M19 19 26.500 26.500" stroke="#e0c55a" strokeWidth="3" />
    <circle cx="12" cy="12" r="10" fill="#bcd2f3" stroke="#3c3f52" strokeWidth="1.700" /><circle cx="9.500" cy="8.500" r="5.500" fill="#eef5ff" />
  </svg>
);

const Ribbon = () => (
  <RibbonBar>
    <Group $w={167}>
      <Col $w={40} $ml={8}><BigTool><SaveIcon /><span>Save</span></BigTool></Col>
      <Tools w={53} ml={5} items={[['cut', 'Cut', true], ['copy', 'Copy', true], ['paste', 'Paste']]} />
      <Tools w={56} ml={0} items={[['undo', 'Undo'], ['redo', 'Redo', true], ['del', 'Delete', true]]} />
    </Group>
    <Group $w={124}>
      <Col $w={115} $ml={8}>
        <Tool $gap={4}><span>Select:</span><Combo $w={75}>Object<Arrow /></Combo></Tool>
        <Tool $gap={3}><Icon n="selName" s={17} /><span>Select by Name</span></Tool>
      </Col>
    </Group>
    <Group $w={63}>
      <Tools w={26} ml={9} items={[['showA', ''], ['showA', '', true], ['showP', '', true]]} />
      <Tools w={26} ml={0} items={[['showWin', ''], ['hideX', '', true]]} />
    </Group>
    <Group $w={122}>
      <Col $w={40} $ml={6}><BigTool><ZoomIcon /><span>Zoom</span><Arrow $ml={0} /></BigTool></Col>
      <Tools w={70} ml={5} items={[['pan', 'Pan'], ['rotate', 'Rotate', false, true], ['orient', 'Orient', false, true]]} />
    </Group>
    <Group $w={96}>
      <Tools w={84} ml={9} items={[['fitAll', 'Fit All'], ['fitSel', 'Fit Selected', true]]} />
    </Group>
    <Group $w={269}>
      <Tools w={26} ml={9} items={[['box', ''], ['cyl', ''], ['poly', '']]} />
      <Tools w={26} ml={0} items={[['cone', ''], ['sphere', ''], ['torus', '']]} />
      <Tools w={25} ml={0} items={[['helix', ''], ['spiral', ''], ['wireBend', '']]} />
      <Rule />
      <Tools w={26} ml={8} items={[['rect', ''], ['circle', ''], ['hexagon', '']]} />
      <Tools w={25} ml={0} items={[['ellipse', ''], ['eqSurf', '']]} />
      <Rule />
      <Tools w={26} ml={8} items={[['line', ''], ['spline', ''], ['arc3', '']]} />
      <Tools w={25} ml={0} items={[['arcC', ''], ['eqCurve', '']]} />
      <Rule />
      <Tools w={26} ml={8} items={[['wireBox', ''], ['point', ''], ['plane', '']]} />
      <Tools w={20} ml={0} items={[['wireBoxS', '', true]]} />
    </Group>
    <Group $w={599}>
      <Tools w={59} ml={9} items={[['move', 'Move', true], ['rot', 'Rotate', true], ['mirror', 'Mirror', true]]} />
      <Rule />
      <Tools w={88} ml={7} items={[['along', 'Along Line', true], ['around', 'Around Axis', true], ['thru', 'Thru Mirror', true]]} />
      <Rule />
      <Tools w={70} ml={7} gap={4} items={[['unite', 'Unite', true], ['subtract', 'Subtract', true], ['intersect', 'Intersect', true]]} />
      <Tools w={63} ml={0} items={[['split', 'Split', true], ['imprint', 'Imprint', true]]} />
      <Rule />
      <Tools w={25} ml={8} items={[['swV', '', true], ['swA', '', true], ['swP', '', true]]} />
      <Rule />
      <Tools w={68} ml={9} gap={2} items={[['fillet', 'Fillet', true], ['chamfer', 'Chamfer', true]]} />
      <Rule />
      <Tools w={72} ml={8} items={[['surface', 'Surface', false, true], ['sheet', 'Sheet', false, true], ['edge', 'Edge', false, true]]} />
      <Rule />
      <Tools w={90} ml={7} items={[['relCS', 'Relative CS', false, true], ['faceCS', 'Face CS', true], ['objCS', 'Object CS', true, true]]} />
    </Group>
    <Group $w={90}>
      <Col $w={84} $ml={7}>
        <Tool $gap={2}><Icon n="measure" /><span>Measure</span><Arrow $ml={3} /></Tool>
        <Col $w={53}><Tool $on><Icon n="ruler" /><span>Ruler</span></Tool></Col>
        <Tool><span>Units</span></Tool>
      </Col>
    </Group>
    <Group $w={77}>
      <Col $w={66} $ml={7}>
        <Col $w={48}><Tool $on $gap={4}><Icon n="grid" /><span>Grid</span></Tool></Col>
        <Combo $w={65}>XY<Arrow /></Combo>
        <Combo $w={65}>3D<Arrow /></Combo>
      </Col>
    </Group>
    <Group $w={63}>
      <Col $w={52} $ml={6}>
        <ToggleRow><Toggle $on><Icon n="snapGrid" /></Toggle><Toggle $on><Icon n="snapC" /></Toggle></ToggleRow>
        <ToggleRow><Toggle $on><Icon n="snapV" /></Toggle><Toggle $on><Icon n="snapE" /></Toggle></ToggleRow>
        <ToggleRow><Toggle $on><Icon n="snapF" /></Toggle><Toggle><Icon n="snapQ" /></Toggle></ToggleRow>
      </Col>
    </Group>
    <Group $w={92}>
      <Col $w={80} $ml={7}>
        <Combo $w={80}>Model<Arrow /></Combo>
        <Combo $w={80}>vacuum<Arrow /></Combo>
        <Tool $off $gap={4}><Icon n="material" /><span>Material</span></Tool>
      </Col>
    </Group>
  </RibbonBar>
);

/* ---------- trees ---------- */
type Row = { g: string; e?: '+' | '-'; i: string; t: string; b?: boolean; s?: boolean };
const PROJECT: Row[] = [
  { g: '', i: 'hcoil', t: 'helical_coil*', b: true },
  { g: 't', e: '-', i: 'magnet', t: 'Maxwell3DDesign1 (Magnetostatic)', b: true },
  { g: '|t', i: 'cube3', t: '3D Components' },
  { g: '|t', i: 'modelIcon', t: 'Model' },
  { g: '|t', i: 'boundary', t: 'Boundaries' },
  { g: '|t', e: '+', i: 'excite', t: 'Excitations' },
  { g: '|t', e: '-', i: 'tools', t: 'Parameters' },
  { g: '||l', i: 'matrix', t: 'Matrix1' },
  { g: '|t', i: 'mesh', t: 'Mesh' },
  { g: '|t', e: '-', i: 'magnifier', t: 'Analysis' },
  { g: '||l', i: 'magnifier', t: 'Setup1' },
  { g: '|t', i: 'optim', t: 'Optimetrics' },
  { g: '|t', e: '-', i: 'results', t: 'Results' },
  { g: '||l', e: '-', i: 'table', t: 'L Table 1' },
  { g: '|| l', i: 'plot', t: 'Matrix1.L(Current1,Current1)' },
  { g: '|l', e: '-', i: 'fields', t: 'Field Overlays', s: true },
  { g: '| l', e: '+', i: 'fieldB', t: 'B' },
  { g: 'l', e: '+', i: 'folderY', t: 'Definitions' },
];
const MODEL: Row[] = [
  { g: 'r', e: '-', i: 'modelIcon', t: 'Model' },
  { g: '|l', e: '-', i: 'block', t: 'Solids' },
  { g: '| t', e: '-', i: 'layers', t: 'aluminum' },
  { g: '| |l', e: '-', i: 'block', t: 'Cylinder3' },
  { g: '| | l', i: 'yCyl', t: 'CreateCylinder' },
  { g: '| t', e: '-', i: 'layers', t: 'copper' },
  { g: '| |l', e: '+', i: 'block', t: 'PolygonHelix1' },
  { g: '| l', e: '-', i: 'layers', t: 'vacuum' },
  { g: '|  l', e: '+', i: 'block', t: 'Region' },
  { g: 't', e: '+', i: 'coord', t: 'Coordinate Systems' },
  { g: 't', e: '+', i: 'planes', t: 'Planes' },
  { g: 'l', e: '+', i: 'lists', t: 'Lists' },
];
const LIBRARY: Row[] = [
  { g: 'r', i: 'favorite', t: 'Favorites', s: true },
  { g: 't', i: 'favorite', t: 'Most Recently Used' },
  { g: 'l', e: '-', i: 'cube3', t: 'Maxwell3D Components' },
  { g: ' t', e: '+', i: 'folder', t: 'Human Body Exposure' },
  { g: ' l', e: '+', i: 'folder', t: 'Qi Wireless Power' },
];

const Tree = ({ rows, h, font, size, ls }: { rows: Row[]; h: number; font: string; size: number; ls: number }) => (
  <>
    {rows.map((r, k) => (
      <TreeRow key={k} $h={h}>
        {r.g.split('').map((c, j) => (
          <Cell key={j}>
            {'|tl'.includes(c) && <Dots $area="1 / 2" />}
            {'|tr'.includes(c) && <Dots $area="2 / 2 / 4 / 3" />}
            {'tlr'.includes(c) && <Dots $area="2 / 2 / 3 / 4" $h />}
            {r.e && j === r.g.length - 1 && <Expander $plus={r.e === '+'} />}
          </Cell>
        ))}
        <TreeIcon><Icon n={r.i} /></TreeIcon>
        <TreeLabel $bold={r.b} $sel={r.s} $font={font} $size={size} $ls={r.b ? ls + 0.45 : ls}>{r.t}</TreeLabel>
      </TreeRow>
    ))}
  </>
);
const ProjectTree = styled(TreePane)` flex: none; height: 398px; & > div { margin-left: -9px; } `;
const ModelTree = styled(TreePane)` margin-top: -1px; border-top: 1px solid #6f6f6f; & > div { margin-left: 0; top: -1px; } ${TreeIcon} + ${TreeLabel} { margin-left: 4px; } `;
const LibraryTree = styled(TreePane)` & > div { margin-left: -1px; } `;

const Pin = () => <svg width="9" height="11" viewBox="0 0 9 11"><path d="M2.500 1V6M6.500 1V6M2 1H7M0 6.500H9M4.500 7V11" stroke="#555" fill="none" /></svg>;
const Cross = () => <svg width="9" height="9" viewBox="0 0 9 9"><path d="M.8.8 8.200 8.200M8.200.8.8 8.200" stroke="#555" strokeWidth="1.200" /></svg>;
const Chevron = ({ right }: { right?: boolean }) => (
  <svg width="8" height="9" viewBox="0 0 8 9"><path d={right ? 'M2 1 5.500 4.500 2 8' : 'M6 1 2.500 4.500 6 8'} stroke="#444" strokeWidth="1.800" fill="none" /></svg>
);
const HScroll = ({ w, l, h = 15 }: { w: number; l: number; h?: number }) => (
  <ScrollTrack $h={h}><Chevron /><Thumb $w={w} $l={l} /><Chevron right /></ScrollTrack>
);
const Header = ({ title }: { title: string }) => <DockHeader><span>{title}</span><Pin /><Cross /></DockHeader>;

/* ---------- field plot ---------- */
type Vec = [x1: number, y1: number, x2: number, y2: number, tone: keyof typeof TONES];
const TONES = {
  green: ['#00cc90', '#00ac76', '#007d54'],
  mint: ['#00f0b4', '#00e0a4', '#00a67a'],
  cyan: ['#00f4ff', '#00ccdc', '#0097a4'],
  teal: ['#00ccd6', '#00a8ae', '#007c80'],
  blue: ['#0a84ff', '#0a6ee4', '#004ca8'],
};
const VECTORS: Vec[] = [
  [774, 408, 771, 326, 'cyan'], [774, 408, 786, 326, 'cyan'], [774, 408, 783, 485, 'blue'],
  [774, 340, 838, 289, 'green'], [774, 340, 849, 373, 'green'],
  [774, 545, 761, 464, 'blue'], [774, 545, 783, 464, 'blue'], [774, 479, 836, 531, 'teal'], [774, 545, 773, 628, 'cyan'],
  [774, 684, 761, 603, 'blue'], [774, 684, 784, 603, 'blue'], [774, 684, 769, 767, 'cyan'],
  [773, 755, 705, 800, 'mint'], [774, 823, 734, 752, 'cyan'], [774, 823, 719, 884, 'blue'],
  [1294, 339, 1253, 269, 'cyan'], [1294, 339, 1243, 404, 'cyan'],
  [1294, 408, 1226, 454, 'mint'], [1294, 476, 1283, 394, 'blue'], [1294, 476, 1302, 395, 'blue'], [1294, 476, 1290, 559, 'cyan'],
  [1294, 615, 1283, 533, 'blue'], [1294, 615, 1303, 533, 'blue'], [1294, 615, 1293, 695, 'cyan'],
  [1294, 753, 1290, 672, 'cyan'], [1294, 753, 1311, 672, 'cyan'], [1294, 753, 1307, 836, 'blue'],
  [1294, 684, 1357, 739, 'green'], [1294, 823, 1358, 774, 'green'], [1294, 823, 1370, 855, 'green'],
];
const FieldArrow = ({ v }: { v: Vec }) => {
  const [x1, y1, x2, y2, tone] = v;
  const [shaft, light, dark] = TONES[tone];
  const len = Math.hypot(x2 - x1, y2 - y1);
  const ux = (x2 - x1) / len, uy = (y2 - y1) / len;
  const bx = x2 - ux * 20, by = y2 - uy * 20;
  const side = ux * 0.3 - uy > 0 ? 1 : -1;
  const px = -uy * 5.5 * side, py = ux * 5.5 * side;
  return (
    <g>
      <path d={`M${x1} ${y1}L${bx} ${by}`} stroke={dark} strokeWidth="2.8" />
      <path d={`M${x1 - 0.3} ${y1 - 0.3}L${bx - 0.3} ${by - 0.3}`} stroke={shaft} strokeWidth="2.2" />
      <path d={`M${bx + px} ${by + py}L${x2} ${y2}L${bx - px} ${by - py}Z`} fill={light} />
      <path d={`M${bx + px * 0.4} ${by + py * 0.4}L${x2} ${y2}L${bx + px} ${by + py}Z`} fill={dark} />
    </g>
  );
};

const DX = [24, 22, 21, 19, 18, 15.5, 14, 12.6, 10.500, 8, 6, 4, 2.500, 1, 0];
const DY = [7, 12, 15.500, 18, 19.500, 21, 22, 23, 24, 24.500, 25, 25.500, 26, 26, 26];
const FieldRow = ({ y, lower }: { y: number; lower?: boolean }) => (
  <g>
    {Array.from({ length: 29 }, (_, i) => {
      const k = i <= 14 ? i : 28 - i;
      const s = i <= 14 ? 1 : -1;
      const x = 774.5 + i * 18.54;
      const dx = DX[k] * s, dy = DY[k];
      const len = Math.hypot(dx, dy), ux = dx / len, uy = dy / len;
      const w = k === 0 ? 1.500 : k === 14 ? 1.700 : Math.min(5, 2 + Math.abs(dx) * 0.240);
      const at = (t: number, n: number) => `${(x + dx * t - uy * n).toFixed(1)} ${(y + dy * t + ux * n).toFixed(1)}`;
      const mint = '#00ffa8';
      const green = '#00ff3c';
      const body = lower && i < 7 ? green : mint;
      return (
        <g key={i}>
          <path d={`M${at(0, 0)}L${at(k ? 0.72 : 1, 0)}`} stroke={body} strokeWidth="1.400" />
          {k === 0 && <path d={`M${at(0.75, 2.2)}L${at(1, 0)}L${at(0.75, -2.2)}Z`} fill={body} />}
          {k > 0 && <path d={`M${at(0, 0)}L${at(0.500, w * 0.65)}L${at(0.720, w)}L${at(1.020, w * 0.15)}L${at(1.020, -w * 0.15)}L${at(0.600, -w)}L${at(0.350, -w * 0.85)}Z`} fill={body} />}
          {lower && i >= 7 && i < 18 && <path d={`M${at(0.500, w * 0.5)}L${at(0.720, w)}L${at(0.900, 0)}L${at(0.620, -w * 0.8)}Z`} fill={green} />}
          {k > 0 && k < 12 && <path d={`M${at(0.080, -1.200 * s)}L${at(0.640, -w * 1.150 * s)}`} stroke={i > 22 && !lower ? '#00d8ff' : body} strokeWidth="1" strokeDasharray="3 1" />}
          {!lower && i > 6 && k > 1 && k < 13 && <path d={`M${at(0.500, -w * s)}L${at(0.660, -w * s)}`} stroke="#00dcff" strokeWidth="1.500" />}
        </g>
      );
    })}
  </g>
);

const Plot = () => (
  <svg width="1454" height="869" viewBox="308 145 1454 869" fontFamily="Liberation Sans, Arial, sans-serif">
    <defs>
      <radialGradient id="red" cx=".35" cy=".35"><stop offset="0" stopColor="#ff2a2a" /><stop offset="1" stopColor="#8a0000" /></radialGradient>
      <linearGradient id="blueBall"><stop offset="0" stopColor="#6f9bff" /><stop offset=".6" stopColor="#4169d8" /><stop offset="1" stopColor="#1b3688" /></linearGradient>
      <linearGradient id="greenBall"><stop offset="0" stopColor="#18d018" /><stop offset="1" stopColor="#003c00" /></linearGradient>
    </defs>
    <g shapeRendering="crispEdges">
      <FieldRow y={240} />
      <FieldRow y={257} lower />
    </g>
    <g shapeRendering="crispEdges">{VECTORS.map((v, i) => <FieldArrow key={i} v={v} />)}</g>
    {/* coordinate axes at the origin */}
    <path d="M1034 881V774" stroke="#4169e1" strokeWidth="2" />
    <path d="M1034 755 1040 774H1028Z" fill="#5f8dff" /><path d="M1034 755 1040 774H1035Z" fill="#1e3c96" />
    <path d="M1034 881H1141" stroke="#009000" strokeWidth="2" />
    <path d="M1160 881 1141 875V887Z" fill="#007000" />
    <circle cx="1034" cy="881" r="6" fill="url(#red)" />
    <text x="1032" y="730" fontSize="23.500" fill="#4169e1">Z</text>
    <text x="1033" y="881" fontSize="23" textLength="15" lengthAdjust="spacingAndGlyphs" fill="#f00">X</text>
    <text x="1183" y="881" fontSize="23.500" fill="#009000">Y</text>
    {/* orientation triad */}
    <path d="M389.500 908V880" stroke="#4a7cf0" strokeWidth="2.500" /><path d="M389.500 882 393 894H386Z" fill="#3058c0" />
    <circle cx="389.500" cy="919" r="6.500" fill="url(#blueBall)" /><circle cx="389.500" cy="948" r="6.500" fill="url(#blueBall)" />
    <circle cx="374" cy="933" r="6" fill="url(#greenBall)" /><circle cx="404.500" cy="933" r="6" fill="#005a00" />
    <rect x="375.500" y="919.500" width="28" height="28" fill="#fff" stroke="#c3ced6" />
    <circle cx="404" cy="919" r="3.400" fill="#8a8a8a" /><circle cx="403" cy="918" r="1.400" fill="#ddd" />
    <path d="M415 933.500H442" stroke="#009000" strokeWidth="2.500" /><path d="M441 933.500 429 930V937Z" fill="#006000" />
    <text x="381.500" y="879" fontSize="14" fontWeight="700" fill="#4169e1">Z</text>
    <text x="382" y="940" fontSize="14" fontWeight="700" fill="#f00" textLength="9" lengthAdjust="spacingAndGlyphs">X</text>
    <text x="443.500" y="940" fontSize="14" fontWeight="700" fill="#009000">Y</text>
    {/* scale bar */}
    <rect x="730.500" y="977.500" width="609" height="10" fill="#fff" stroke="#000" />
    <rect x="1035" y="977" width="305" height="11" fill="#000" />
    <g fontSize="14.500" fill="#222">
      <text x="730" y="1008.500" textAnchor="middle">0</text><text x="1035" y="1008.500" textAnchor="middle" textLength="15">35</text><text x="1332" y="1008.500" textLength="56">70 (mm)</text>
    </g>
  </svg>
);

const SCALE = ['#ff0000', '#ff7300', '#ffe600', '#a6ff00', '#33ff00', '#00ff33', '#00ffb0', '#00e5ff', '#0073ff', '#0000ff'];
const TICKS = ['61.0', '54.9', '48.8', '42.7', '36.6', '30.5', '24.4', '18.3', '12.2', '6.1', '0.0'];

export default function App() {
  return (
    <Shell>
      <Global />
      <TitleBar>
        <Icon n="ansysEdt" />
        <TitleText>Ansys Electronics Desktop 2023 R2 - helical_coil - Maxwell3DDesign1 - 3D Modeler - SOLVED - [helical_coil - Maxwell3DDesign1 - Modeler]</TitleText>
        <WindowButtons>
          <svg width="16" height="16" viewBox="0 0 16 16"><path d="M3 8.500H13" stroke="#000" /></svg>
          <svg width="16" height="16" viewBox="0 0 16 16"><path d="M3.500 5.500H10.500V12.500H3.500ZM5.500 5V3.500H12.500V10.500H11" stroke="#000" fill="none" /></svg>
          <svg width="16" height="16" viewBox="0 0 16 16"><path d="M3 3 13 13M13 3 3 13" stroke="#000" fill="none" /></svg>
        </WindowButtons>
      </TitleBar>
      <MenuBar>
        <Icon n="doc" s={15} /><MenuItem $w={8} />
        {([['File', 32], ['Edit', 34], ['View', 39], ['Project', 51], ['Draw', 41], ['Modeler', 58], ['Maxwell 3D', 75], ['Tools', 41], ['Window', 58], ['Help', 40]] as [string, number][]).map(([t, w]) => (
          <MenuItem key={t} $w={w}>{t}</MenuItem>
        ))}
        <MdiButtons>
          <MdiButton><svg width="10" height="10"><path d="M2 8H8" stroke="#667487" strokeWidth="2" /></svg></MdiButton>
          <MdiButton><svg width="10" height="10"><path d="M1.500 5H6.500V9H1.500ZM3.500 4V1.500H8.500V6H7" stroke="#667487" strokeWidth="1.300" fill="none" /></svg></MdiButton>
          <MdiButton><svg width="10" height="10"><path d="M2 2 8 8M8 2 2 8" stroke="#667487" strokeWidth="2" /></svg></MdiButton>
        </MdiButtons>
      </MenuBar>
      <Ribbon />
      <TabStrip>
        {([['Desktop', 70], ['View', 56], ['Draw', 53], ['Model', 63], ['Simulation', 83], ['Results', 67], ['Automation', 89], ['Ansys Minerva', 105], ['Learning and Support', 144]] as [string, number][]).map(([t, w]) => (
          <Tab key={t} $w={w} $active={t === 'Draw'}>{t}</Tab>
        ))}
        <TabIcons>
          <svg width="14" height="14" viewBox="0 0 14 14"><circle cx="7" cy="7" r="6.800" fill="#2467b0" /><path d="M4.800 5.300Q5 3.200 7.100 3.200 9.300 3.300 9.300 5.200 9.200 6.300 7.100 7.400V8.600" stroke="#fff" strokeWidth="1.500" fill="none" /><rect x="6.300" y="9.600" width="1.600" height="1.600" fill="#fff" /></svg>
          <svg width="16" height="16" viewBox="0 0 16 16"><rect width="16" height="16" rx="2" fill="#f9c215" /><path d="M6 0H10L16 14 14 16H11L8 6 4 16H1L0 14Z" fill="#1a1a1a" /><path d="M8 6 10.500 15H5Z" fill="#f9b215" /></svg>
        </TabIcons>
      </TabStrip>
      <Workspace>
        <Dock>
          <Header title="Project Manager" />
          <ProjectTree><Tree rows={PROJECT} h={18} font={UI} size={11} ls={-0.4} /></ProjectTree>
          <HScroll w={65} l={17} h={16} />
          <Splitter $h />
          <Header title="Properties" />
          <PropertiesBox />
        </Dock>
        <Splitter />
        <ModelPane>
          <ModelTree><Tree rows={MODEL} h={18} font={UI} size={11.5} ls={-0.12} /></ModelTree>
          <HScroll w={80} l={5} />
        </ModelPane>
        <Gap />
        <Viewport>
          <Plot />
          <Legend>
            <LegendTitle>B<br />[mTesla]</LegendTitle>
            <LegendLine>Max: 60.363</LegendLine>
            <LegendBody>
              <Swatches>{SCALE.map(c => <Swatch key={c} $c={c} />)}</Swatches>
              <Ticks>{TICKS.map(t => <Tick key={t}>{t}</Tick>)}</Ticks>
            </LegendBody>
            <LegendLine>Min:  0.169</LegendLine>
          </Legend>
          <Brand><BrandName>Ansys</BrandName><BrandYear>2023 R2</BrandYear><BrandTier>TEACHING</BrandTier></Brand>
        </Viewport>
        <Splitter />
        <Dock>
          <Header title="Component Librar..." />
          <LibraryFrame>
            <LibraryPane>
              <LibraryTree><Tree rows={LIBRARY} h={16} font={SANS} size={11} ls={-0.15} /></LibraryTree>
              <HScroll w={58} l={5} />
            </LibraryPane>
            <LibraryTabs><LibraryTab>Components</LibraryTab><LibraryEdge /></LibraryTabs>
          </LibraryFrame>
        </Dock>
      </Workspace>
      <StatusBar>
        <span>Nothing is selected</span>
        <StatusButton $w={120}>
          <svg width="12" height="12" viewBox="0 0 12 12"><path d="M6 .5 11.700 11.500H.3Z" fill="#f8d820" stroke="#a88a10" strokeWidth=".6" /><path d="M6 4V8M6 9V10.500" stroke="#111" strokeWidth="1.500" /></svg>
          Show 6 Messages
        </StatusButton>
        <StatusButton $w={104}>
          <svg width="11" height="6" viewBox="0 0 11 6"><rect width="11" height="5" fill="#bbb" /><rect y="1" width="6" height="3" fill="#00e000" /><path d="M0 .5H11M.5 0V4" stroke="#555" /></svg>
          Show Progress
        </StatusButton>
      </StatusBar>
      <Taskbar>
        <Start><svg width="16" height="16" viewBox="0 0 16 16"><path d="M0 2.300 7 1.300V7.600H0ZM8 1.200 16 0V7.600H8ZM0 8.500H7V14.800L0 13.800ZM8 8.500H16V16L8 14.900Z" fill="#fff" /></svg></Start>
        <Search>
          <svg width="18" height="18" viewBox="0 0 18 18"><circle cx="11" cy="6.500" r="5" fill="none" stroke="#222" strokeWidth="1.300" /><path d="M7.400 10.300 1.500 16.500" stroke="#222" strokeWidth="1.300" /></svg>
          Type here to search
        </Search>
        <TaskButton $ml={8} $w={32}><svg width="17" height="16" viewBox="0 0 17 16"><path d="M1 0V2.500H10V0M1 16V13.500H10V16M1.500 5H9.500V11H1.500ZM14.500 0V16" fill="none" stroke="#fff" strokeWidth="1.200" /><rect x="13" y="4" width="3" height="3" fill="#fff" /></svg></TaskButton>
        <TaskButton $ml={11} $w={48}>
          <svg width="24" height="24" viewBox="0 0 24 24">
            <defs>
              <linearGradient id="e1"><stop offset="0" stopColor="#1b9de2" /><stop offset="1" stopColor="#5fd668" /></linearGradient>
              <clipPath id="ec"><circle cx="12" cy="12" r="12" /></clipPath>
            </defs>
            <g clipPath="url(#ec)">
              <rect width="24" height="24" fill="#1683d8" />
              <path d="M0 10Q3 0 12 0H24V16H15Q14 15 15 12.500 14.500 8 9.500 7.500 3 7.500 0 13Z" fill="url(#e1)" />
              <path d="M8.500 11Q8 20 17 19.500 21 19 24 17V24H14Q8 20 8 15Z" fill="#0c4a94" />
              <path d="M15 15.500Q20 17 24 14V18Q20 20 15 19.500 10 18 9.500 13 11 9.500 14 11 15.500 13 14 14.500Z" fill="#22393f" />
            </g>
          </svg>
        </TaskButton>
        <TaskButton $ml={5} $w={40} $open>
          <svg width="22" height="20" viewBox="0 0 22 20"><path d="M0 1H8L10 3H22V19H0Z" fill="#e8a820" /><rect y="5" width="22" height="14" fill="#ffd766" /><path d="M4 19V13Q4 11 6 11H16Q18 11 18 13V19H14V15H8V19Z" fill="#3a8edb" /></svg>
        </TaskButton>
        <TaskButton $ml={8} $w={42}>
          <svg width="24" height="24" viewBox="0 0 24 24"><path d="M6 7V2H18V7" fill="none" stroke="#28a4e4" strokeWidth="2" /><rect x="0" y="5.500" width="23" height="18" rx="2" fill="#f4f4f4" /><rect x="7" y="9" width="4.200" height="4.500" fill="#f25022" /><rect x="12.200" y="9" width="4.200" height="4.500" fill="#7fba00" /><rect x="7" y="14.500" width="4.200" height="4.500" fill="#00a4ef" /><rect x="12.200" y="14.500" width="4.200" height="4.500" fill="#ffb900" /></svg>
        </TaskButton>
        <TaskButton $ml={4} $w={48} $open $active>
          <svg width="24" height="24" viewBox="0 0 24 24"><rect width="24" height="24" fill="#0a0805" /><g fill="none" stroke="#d08f28" strokeWidth="1.500"><path d="M10.500 2Q6.500 8 10.500 14M7.500 1Q3.500 8 7.500 15M4.500 1Q.5 8 4.500 15M13.500 2Q17.500 8 13.500 14M16.500 1Q20.500 8 16.500 15M19.500 1Q23.500 8 19.500 15" /></g><text x="12" y="23.300" fontSize="8.500" fontWeight="700" fontFamily="Liberation Sans" fill="#fff" textAnchor="middle">EDT</text></svg>
        </TaskButton>
        <Tray>
          <TrayItem $mr={26}><svg width="24" height="16" viewBox="0 0 24 16"><path d="M1 1H20V13Q20 15 22 15 23 15 23 13V4H20M1 1V13Q1 15 3 15H22" fill="none" stroke="#fff" strokeWidth="1.500" /><path d="M4 4.500H17M11 7.500H17M11 9.500H17M11 11.500H17" stroke="#fff" /><rect x="4" y="7" width="5" height="5" fill="none" stroke="#fff" strokeWidth="1.300" /></svg></TrayItem>
          <TrayItem $mr={10}><svg width="12" height="8" viewBox="0 0 12 8"><path d="M.7 7 6 1.500 11.300 7" stroke="#fff" strokeWidth="1.300" fill="none" /></svg></TrayItem>
          <TrayItem $mr={8}><svg width="16" height="15" viewBox="0 0 16 15"><path d="M5 3.500H15.500V10.500H4V6M9.500 10.500V13.500M5 14H13M.7 1.500H4.500V5.500H.7ZM2.500 5.500V9" stroke="#fff" fill="none" strokeWidth="1.100" /></svg></TrayItem>
          <TrayItem $mr={8}><svg width="17" height="14" viewBox="0 0 17 14"><path d="M.7 5H3L6.500 1.500V12.500L3 9H.7Z" stroke="#fff" fill="none" strokeWidth="1.100" /><path d="M9 5Q10 7 9 9M11.500 3Q13.500 7 11.500 11M14 1Q17 7 14 13" stroke="#fff" fill="none" strokeWidth="1.100" /></svg></TrayItem>
          <Clock>01:31<br />2024/10/24</Clock>
          <svg width="16" height="16" viewBox="0 0 16 16"><path d="M.7.7H15.300V12H11L8 15 8 12H.7Z" fill="none" stroke="#fff" strokeWidth="1.300" /></svg>
          <ShowDesktop />
        </Tray>
      </Taskbar>
    </Shell>
  );
}
